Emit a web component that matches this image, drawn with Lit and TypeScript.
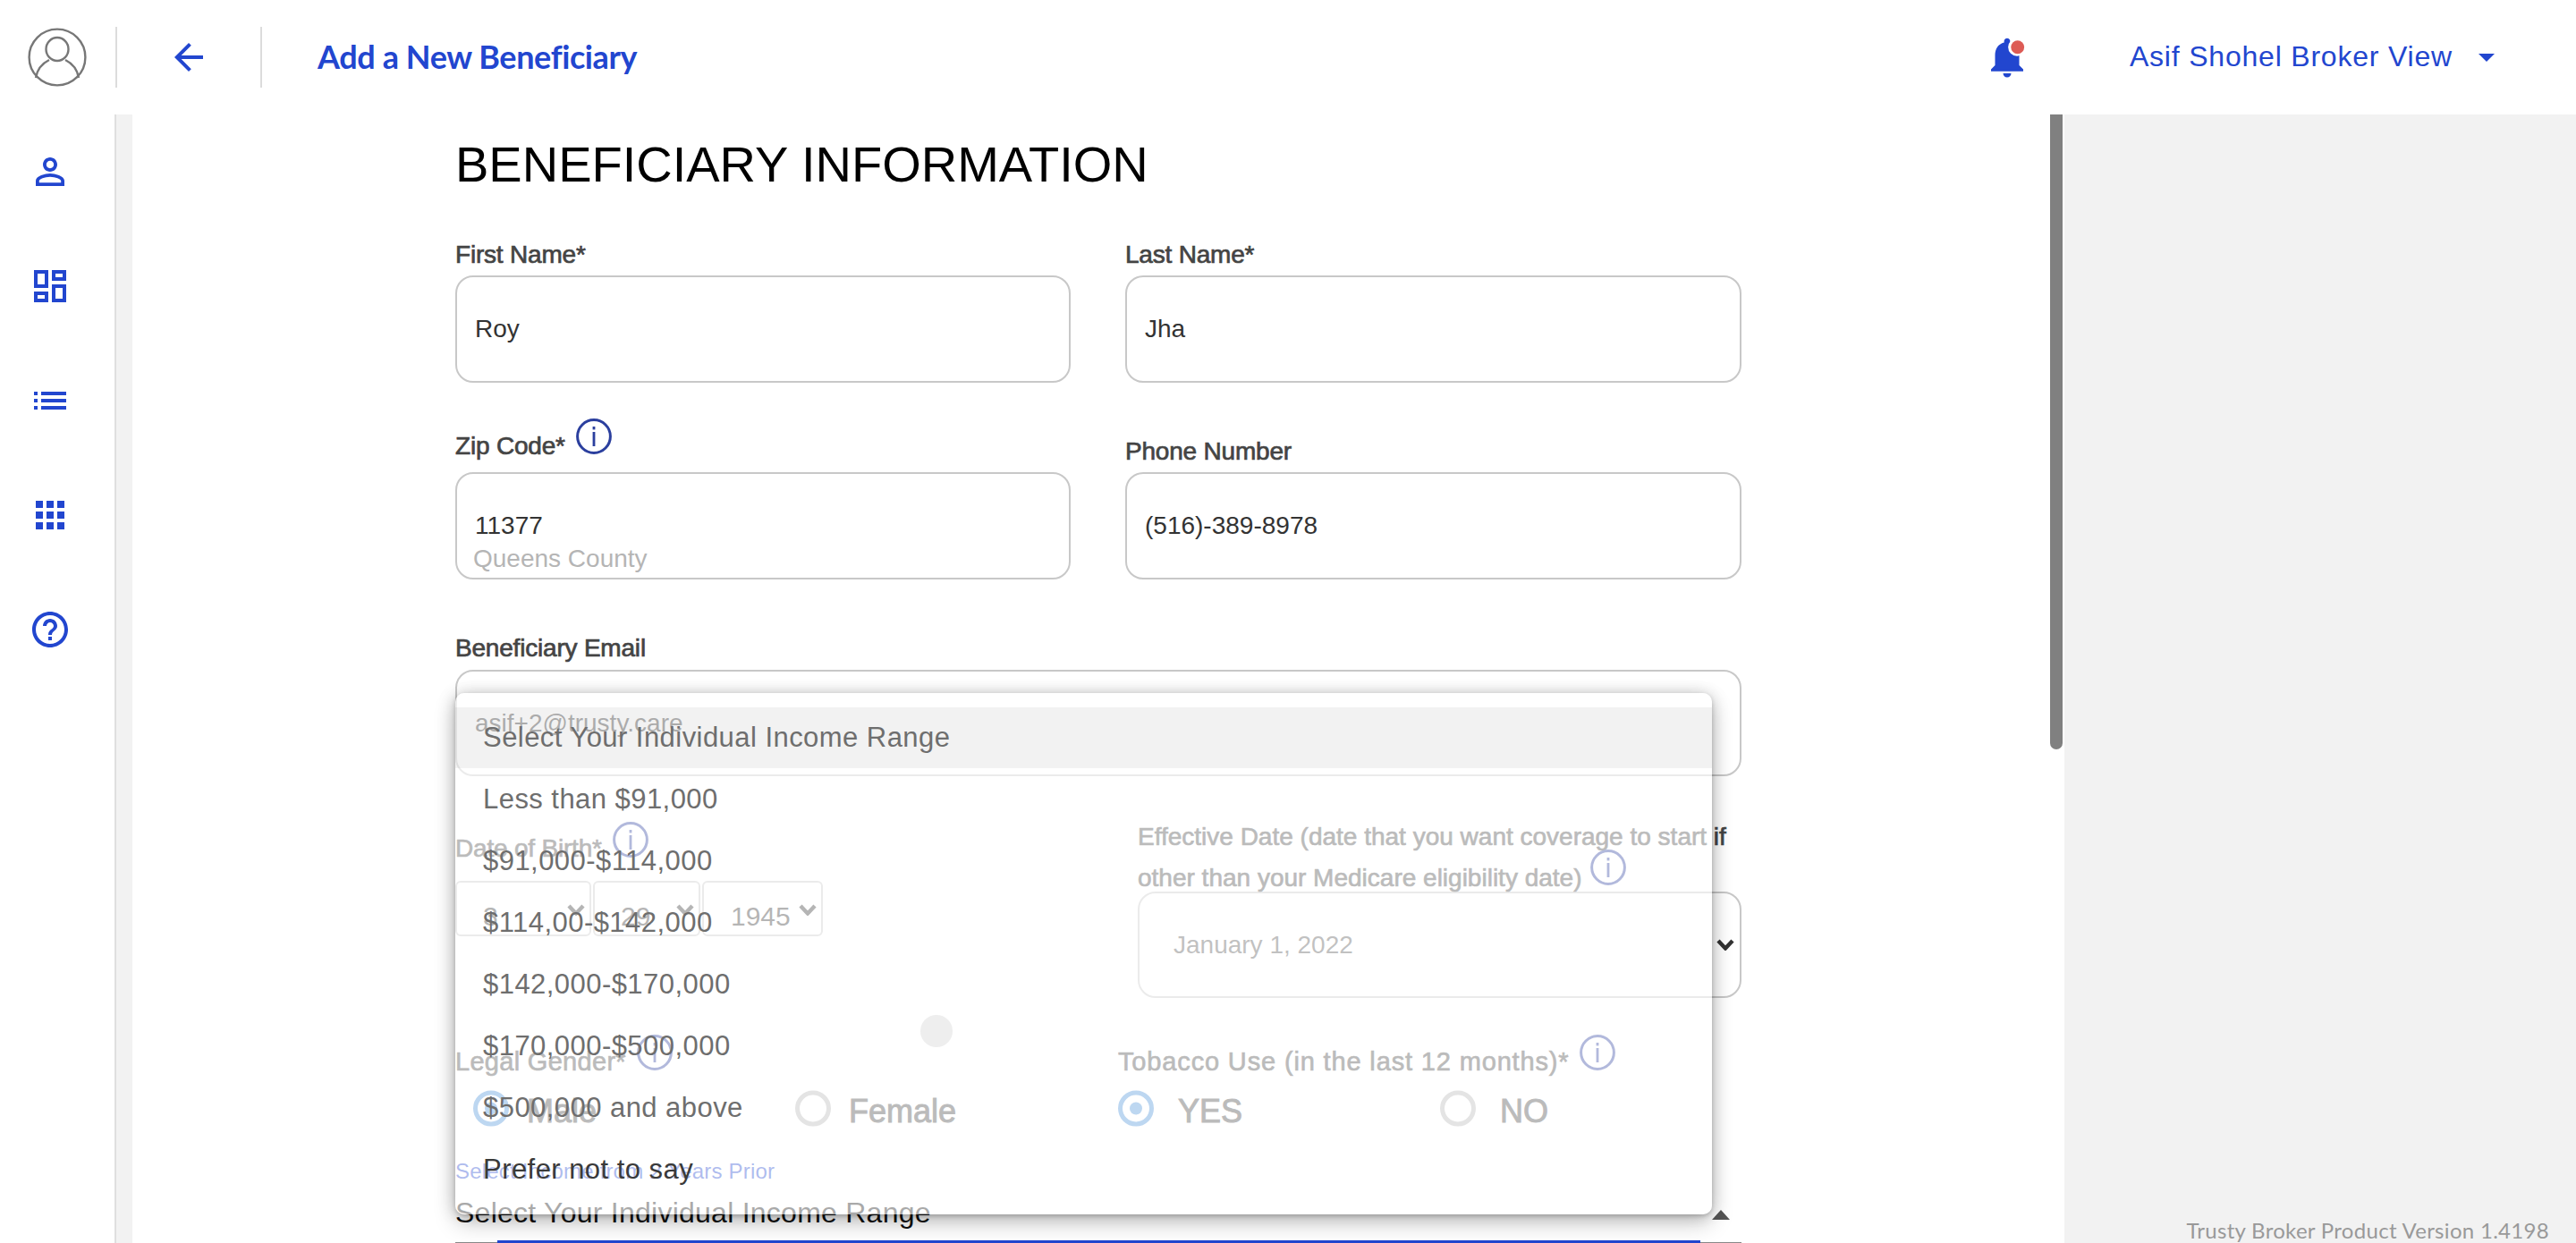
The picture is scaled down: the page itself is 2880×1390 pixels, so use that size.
import { LitElement, html, css, svg } from "lit";
import { customElement } from "lit/decorators.js";

const navIcons = [
  "M12 5.9c1.16 0 2.1.94 2.1 2.1s-.94 2.1-2.1 2.1S9.9 9.16 9.9 8s.94-2.1 2.1-2.1m0 9c2.97 0 6.1 1.46 6.1 2.1v1.1H5.9V17c0-.64 3.13-2.1 6.1-2.1M12 4C9.79 4 8 5.79 8 8s1.79 4 4 4 4-1.79 4-4-1.79-4-4-4zm0 9c-2.67 0-8 1.34-8 4v3h16v-3c0-2.66-5.33-4-8-4z",
  "M19 5v2h-4V5h4M9 5v6H5V5h4m10 8v6h-4v-6h4M9 17v2H5v-2h4M21 3h-8v6h8V3zM11 3H3v10h8V3zm10 8h-8v10h8V11zm-10 4H3v6h8v-6z",
  "M3 13h2v-2H3v2zm0 4h2v-2H3v2zm0-8h2V7H3v2zm4 4h14v-2H7v2zm0 4h14v-2H7v2zM7 7v2h14V7H7z",
  "M4 8h4V4H4v4zm6 12h4v-4h-4v4zm-6 0h4v-4H4v4zm0-6h4v-4H4v4zm6 0h4v-4h-4v4zm6-10v4h4V4h-4zm-6 4h4V4h-4v4zm6 6h4v-4h-4v4zm0 6h4v-4h-4v4z",
  "M11 18h2v-2h-2v2zm1-16C6.48 2 2 6.48 2 12s4.48 10 10 10 10-4.48 10-10S17.52 2 12 2zm0 18c-4.41 0-8-3.59-8-8s3.59-8 8-8 8 3.59 8 8-3.59 8-8 8zm0-14c-2.21 0-4 1.79-4 4h2c0-1.1.9-2 2-2s2 .9 2 2c0 2-3 1.75-3 5h2c0-2.25 3-2.5 3-5 0-2.21-1.79-4-4-4z",
];
const incomes = [
  "Select Your Individual Income Range",
  "Less than $91,000",
  "$91,000-$114,000",
  "$114,00-$142,000",
  "$142,000-$170,000",
  "$170,000-$500,000",
  "$500,000 and above",
  "Prefer not to say",
];

const info = () => html`<svg class="info" viewBox="0 0 40 40" aria-hidden="true">
  <circle cx="20" cy="20" r="18.4" fill="none" stroke="#2b3f9e" stroke-width="3"></circle>
  <rect x="18.6" y="9" width="2.8" height="3.4" fill="#2b3f9e"></rect>
  <rect x="18.6" y="15" width="2.8" height="16" fill="#2b3f9e"></rect>
</svg>`;
const chevron = () => html`<svg class="chev" viewBox="0 0 20 13" aria-hidden="true">
  <path d="M2 2l8 8.5L18 2" fill="none" stroke="currentColor" stroke-width="4.4"></path>
</svg>`;
const radio = (on: boolean) => html`<svg class="radio" viewBox="0 0 40 40" aria-hidden="true">
  <circle cx="20" cy="20" r="17.5" fill="none" stroke=${on ? "#4a90d9" : "#b4b4b4"} stroke-width="5"></circle>
  ${on ? svg`<circle cx="20" cy="20" r="7" fill="#4a90d9"></circle>` : ""}
</svg>`;

@customElement("app-root")
export class AppRoot extends LitElement {
  static styles = css`
    :host { display: block; height: 1390px; overflow: hidden; font-family: "Liberation Sans", Arial, sans-serif; background: #fff; }
    * { box-sizing: border-box; }
    .header { height: 128px; display: flex; align-items: center; background: #fff; color: #2246cf; }
    .avatar-cell { width: 129px; display: flex; justify-content: flex-start; padding-left: 31px; }
    .avatar { width: 66px; height: 66px; display: block; }
    .sep { width: 2px; height: 68px; background: #dcdcdc; }
    .back-cell { width: 160px; display: flex; justify-content: center; }
    .back { width: 48px; height: 48px; fill: currentColor; display: block; }
    .title { margin: 0 0 2px 62px; font-family: Lato, sans-serif; font-weight: 700; font-size: 36px; letter-spacing: -.4px; flex: 1; }
    .bell { width: 54px; height: 54px; display: block; margin-right: 110px; }
    .user { font-size: 32px; letter-spacing: .8px; margin-bottom: 2px; }
    .caret { width: 0; height: 0; margin: 0 91px 0 29px; border-left: 9px solid transparent; border-right: 9px solid transparent; border-top: 9px solid currentColor; }
    .body { display: flex; height: 1262px; }
    .side { width: 128px; display: flex; flex-direction: column; align-items: center; gap: 80px; padding: 40px 16px 0 0; color: #2246cf; }
    .side svg { width: 48px; height: 48px; flex: none; fill: currentColor; display: block; }
    .strip { width: 20px; background: #f2f2f2; border-left: 2px solid #dfdfdf; }
    .main { width: 2144px; position: relative; overflow: hidden; background: #fff; padding-left: 361px; display: flex; }
    .form { width: 1438px; height: 1262px; flex: none; color: #444; }
    h1 { margin: 0; padding-top: 23px; height: 140px; font-weight: 400; font-size: 56px; line-height: 66px; color: #000; }
    .grid { display: grid; grid-template-columns: 688px 689px; column-gap: 61px; }
    .lab { height: 40px; font-size: 28px; line-height: 32px; color: #444; -webkit-text-stroke: .7px #444; letter-spacing: -.2px; }
    .grid .lab { line-height: 34px; }
    .box { height: 120px; border: 2px solid #c8c8c8; border-radius: 20px; font-size: 28px; color: #333; display: flex; align-items: center; padding-left: 20px; background: #fff; }
    .zip { flex-direction: column; align-items: flex-start; justify-content: flex-start; padding: 42px 0 0 20px; line-height: 32px; }
    .county { margin-left: -2px; margin-top: 5px; color: #b5b5b5; font-size: 28px; }
    .row2 { margin-top: 60px; }
    .lab-i { display: flex; align-items: flex-start; gap: 12px; }
    .lab-i span { margin-top: 14px; }
    .zip-lab { height: 60px; margin-top: -20px; }
    .info { width: 40px; height: 40px; flex: none; display: block; }
    .mail { margin-top: 61px; }
    .mail .box { color: #333; height: 119px; }
    .row4 { margin-top: 45px; display: grid; grid-template-columns: 763px 675px; }
    .dob-lab { margin-top: 6px; height: 46px; gap: 12px; }
    .selects { display: flex; gap: 2px; margin-top: 20px; }
    .sel { height: 62px; border: 2px solid #c8c8c8; border-radius: 6px; font-size: 30px; color: #333; display: flex; justify-content: space-between; padding: 16px 5px 0 29px; }
    .s1 { width: 152px; } .s2 { width: 120px; } .s3 { width: 135px; padding-left: 30px; }
    .chev { width: 20px; height: 13px; color: #333; margin-top: 8px; display: block; flex: none; }
    .sel span { line-height: 44px; }
    .eff { font-size: 28px; line-height: 46px; color: #444; -webkit-text-stroke: .7px #444; }
    .eff .info { display: inline-block; margin: -20px 0 1px 10px; }
    .date { margin-top: -8px; height: 119px; justify-content: space-between; padding: 0 6px 0 38px; color: #555; }
    .date .chev { margin: 0; }
    .row5 { margin-top: 41px; display: grid; grid-template-columns: 741px 697px; }
    .r-lab { height: 62px; gap: 12px; font-size: 29px; letter-spacing: .3px; }
    .right .r-lab { letter-spacing: .85px; gap: 11px; }
    .radios { display: flex; }
    .left .radios { padding-left: 20px; }
    .opt { width: 360px; flex: none; display: flex; font-size: 36px; color: #444; gap: 20px; -webkit-text-stroke: 1px #444; }
    .right .opt { gap: 27px; }
    .radio { width: 40px; height: 41px; flex: none; display: block; }
    .opt span { line-height: 48px; }
    .hint { margin-top: 28px; height: 30px; line-height: 30px; font-size: 24px; letter-spacing: .2px; color: #2246cf; }
    .income { height: 66px; border-bottom: 2px solid #888; font-size: 32px; letter-spacing: .25px; color: #111; display: flex; justify-content: space-between; padding: 11px 13px 0 0; line-height: 40px; }
    .tri { width: 0; height: 0; margin-top: 17px; border-left: 10px solid transparent; border-right: 10px solid transparent; border-bottom: 11px solid #555; }
    .active { height: 4px; margin: -4px 46px 0 47px; background: #2246cf; }
    .menu { position: absolute; left: 361px; top: 647px; width: 1405px; height: 583px; padding-top: 16px; background: rgba(255,255,255,.64); border-radius: 10px; box-shadow: 0 10px 24px rgba(0,0,0,.22), 0 2px 5px rgba(0,0,0,.18), -4px 0 18px rgba(0,0,0,.1), 4px 0 18px rgba(0,0,0,.08); }
    .item { height: 69px; padding-left: 31px; font-size: 31px; line-height: 67px; letter-spacing: .45px; color: #6e6e6e; }
    .item.sel-on { height: 68px; margin-bottom: 1px; background: rgba(0,0,0,.05); }
    .item.last { color: #3a3a3a; }
    .ripple { position: absolute; left: 520px; top: 360px; width: 36px; height: 36px; border-radius: 50%; background: #eee; }
    .scroll { width: 16px; background: #fff; }
    .thumb { width: 14px; height: 710px; background: #808080; border-radius: 0 0 7px 7px; }
    .panel { flex: 1; background: #f2f2f2; display: flex; align-items: flex-end; justify-content: flex-end; padding: 0 30px 2px 0; font-family: Lato, sans-serif; font-size: 24px; letter-spacing: .3px; line-height: 24px; color: #999; }
  `;

  render() {
    return html`
      <div class="header">
        <div class="avatar-cell">
          <svg class="avatar" viewBox="0 0 66 66" fill="none" stroke="#777" stroke-width="2.4" aria-hidden="true">
            <circle cx="33" cy="33" r="31.4"></circle>
            <ellipse cx="33" cy="24" rx="12.5" ry="13"></ellipse>
            <path d="M9 56c2-12 9-17 15-20M42 36c6 3 13 8 15 20"></path>
          </svg>
        </div>
        <div class="sep"></div>
        <div class="back-cell">
          <svg class="back" viewBox="0 0 24 24" aria-hidden="true"><path d="M20 11H7.83l5.59-5.59L12 4l-8 8 8 8 1.41-1.41L7.83 13H20v-2z"></path></svg>
        </div>
        <div class="sep"></div>
        <div class="title">Add a New Beneficiary</div>
        <svg class="bell" viewBox="0 0 24 24" aria-hidden="true">
          <path fill="#2246cf" d="M12 22c1.1 0 2-.9 2-2h-4c0 1.1.89 2 2 2zm6-6v-5c0-3.07-1.64-5.64-4.5-6.32V4c0-.83-.67-1.5-1.5-1.5s-1.5.67-1.5 1.5v.68C7.63 5.36 6 7.92 6 11v5l-2 2v1h16v-1l-2-2z"></path>
          <circle cx="16.9" cy="7" r="4.4" fill="#fff"></circle>
          <circle cx="17.2" cy="7" r="3.3" fill="#dd5b55"></circle>
        </svg>
        <div class="user">Asif Shohel Broker View</div>
        <div class="caret"></div>
      </div>
      <div class="body">
        <nav class="side">
          ${navIcons.map((d) => html`<svg viewBox="0 0 24 24" aria-hidden="true"><path d=${d}></path></svg>`)}
        </nav>
        <div class="strip"></div>
        <main class="main">
          <div class="form">
            <h1>BENEFICIARY INFORMATION</h1>
            <div class="grid">
              <div><div class="lab">First Name*</div><div class="box">Roy</div></div>
              <div><div class="lab">Last Name*</div><div class="box">Jha</div></div>
            </div>
            <div class="grid row2">
              <div>
                <div class="lab lab-i zip-lab"><span>Zip Code*</span>${info()}</div>
                <div class="box zip"><div>11377</div><div class="county">Queens County</div></div>
              </div>
              <div><div class="lab">Phone Number</div><div class="box">(516)-389-8978</div></div>
            </div>
            <div class="mail">
              <div class="lab">Beneficiary Email</div>
              <div class="box">asif+2@trusty.care</div>
            </div>
            <div class="row4">
              <div>
                <div class="lab lab-i dob-lab"><span>Date of Birth*</span>${info()}</div>
                <div class="selects">
                  <div class="sel s1"><span>3</span>${chevron()}</div>
                  <div class="sel s2"><span>29</span>${chevron()}</div>
                  <div class="sel s3"><span>1945</span>${chevron()}</div>
                </div>
              </div>
              <div>
                <div class="eff">Effective Date (date that you want coverage to start if other than your Medicare eligibility date)${info()}</div>
                <div class="box date">January 1, 2022${chevron()}</div>
              </div>
            </div>
            <div class="row5">
              <div class="left">
                <div class="lab lab-i r-lab"><span>Legal Gender*</span>${info()}</div>
                <div class="radios">
                  <div class="opt">${radio(true)}<span>Male</span></div>
                  <div class="opt">${radio(false)}<span>Female</span></div>
                </div>
              </div>
              <div class="right">
                <div class="lab lab-i r-lab"><span>Tobacco Use (in the last 12 months)*</span>${info()}</div>
                <div class="radios">
                  <div class="opt">${radio(true)}<span>YES</span></div>
                  <div class="opt">${radio(false)}<span>NO</span></div>
                </div>
              </div>
            </div>
            <div class="hint">Select Income from 2 Years Prior</div>
            <div class="income"><span>Select Your Individual Income Range</span><div class="tri"></div></div>
            <div class="active"></div>
          </div>
          <div class="menu">
            ${incomes.map((t, i) => html`<div class="item ${i === 0 ? "sel-on" : ""} ${i === 7 ? "last" : ""}">${t}</div>`)}
            <div class="ripple"></div>
          </div>
        </main>
        <div class="scroll"><div class="thumb"></div></div>
        <div class="panel">Trusty Broker Product Version 1.4198</div>
      </div>
    `;
  }
}
